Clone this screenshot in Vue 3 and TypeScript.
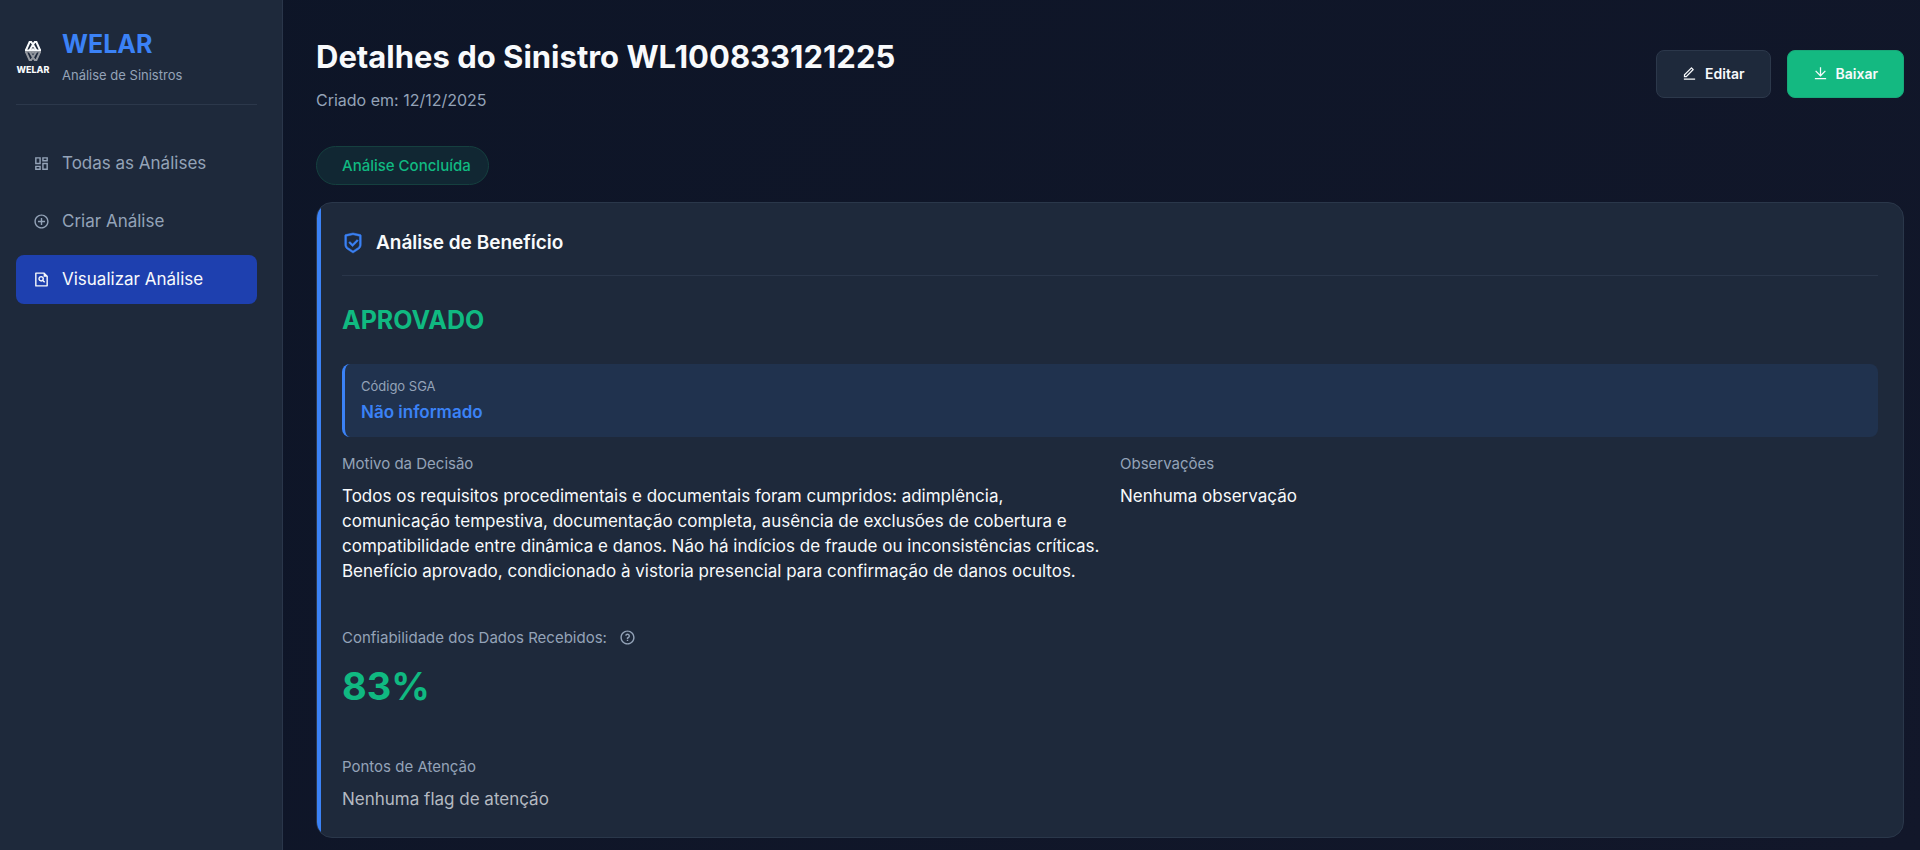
<script setup lang="ts">
interface NavItem {
  label: string
  icon: string
  active: boolean
}

const ring =
  'M12 22C6.47715 22 2 17.5228 2 12C2 6.47715 6.47715 2 12 2C17.5228 2 22 6.47715 22 12C22 17.5228 17.5228 22 12 22ZM12 20C16.4183 20 20 16.4183 20 12C20 7.58172 16.4183 4 12 4C7.58172 4 4 7.58172 4 12C4 16.4183 7.58172 20 12 20Z'

const icons = {
  dashboard:
    'M13 21V11H21V21H13ZM3 13V3H11V13H3ZM9 11V5H5V11H9ZM3 21V15H11V21H3ZM5 19H9V17H5V19ZM15 19H19V13H15V19ZM13 3H21V9H13V3ZM15 5V7H19V5H15Z',
  add: 'M11 11V7H13V11H17V13H13V17H11V13H7V11H11Z' + ring,
  fileSearch:
    'M15 4H5V20H19V8H15V4ZM3 2.9918C3 2.44405 3.44749 2 3.9985 2H16L20.9997 7L21 20.9925C21 21.5489 20.5551 22 20.0066 22H3.9934C3.44476 22 3 21.5447 3 21.0082V2.9918ZM13.529 14.4464C11.9951 15.3524 9.98633 15.1464 8.66839 13.8284C7.1063 12.2663 7.1063 9.73367 8.66839 8.17157C10.2305 6.60948 12.7631 6.60948 14.3252 8.17157C15.6432 9.48951 15.8492 11.4983 14.9432 13.0322L17.1537 15.2426L15.7395 16.6569L13.529 14.4464ZM12.911 12.4142C13.6921 11.6332 13.6921 10.3668 12.911 9.58579C12.13 8.80474 10.8637 8.80474 10.0826 9.58579C9.30156 10.3668 9.30156 11.6332 10.0826 12.4142C10.8637 13.1953 12.13 13.1953 12.911 12.4142Z',
  shield:
    'M12 1L20.2169 2.82598C20.6745 2.92766 21 3.33347 21 3.80217V13.7889C21 15.795 19.9974 17.6684 18.3282 18.7812L12 23L5.6718 18.7812C4.00261 17.6684 3 15.795 3 13.7889V3.80217C3 3.33347 3.32553 2.92766 3.78307 2.82598L12 1ZM12 3.04879L5 4.60434V13.7889C5 15.1263 5.6684 16.3752 6.7812 17.1171L12 20.5963L17.2188 17.1171C18.3316 16.3752 19 15.1263 19 13.7889V4.60434L12 3.04879ZM16.4524 8.22183L17.8666 9.63604L11.5026 16L7.25999 11.7574L8.67421 10.3431L11.5019 13.1709L16.4524 8.22183Z',
  edit: 'M6.41421 15.89L16.5563 5.74785L15.1421 4.33363L5 14.4758V15.89H6.41421ZM7.24264 17.89H3V13.6473L14.435 2.21231C14.8256 1.82179 15.4587 1.82179 15.8492 2.21231L18.6777 5.04074C19.0682 5.43126 19.0682 6.06443 18.6777 6.45495L7.24264 17.89ZM3 19.89H21V21.89H3V19.89Z',
  download:
    'M3 19H21V21H3V19ZM13 13.1716L19.0711 7.1005L20.4853 8.51472L12 17L3.51472 8.51472L4.92893 7.1005L11 13.1716V2H13V13.1716Z',
  question:
    ring +
    'M11 15H13V17H11V15ZM13 13.3551V14H11V12.5C11 11.9477 11.4477 11.5 12 11.5C12.8284 11.5 13.5 10.8284 13.5 10C13.5 9.17157 12.8284 8.5 12 8.5C11.2723 8.5 10.6656 9.01823 10.5288 9.70577L8.56731 9.31346C8.88637 7.70919 10.302 6.5 12 6.5C13.933 6.5 15.5 8.067 15.5 10C15.5 11.5855 14.4457 12.9248 13 13.3551Z',
}

const nav: NavItem[] = [
  { label: 'Todas as Análises', icon: icons.dashboard, active: false },
  { label: 'Criar Análise', icon: icons.add, active: false },
  { label: 'Visualizar Análise', icon: icons.fileSearch, active: true },
]
</script>

<template>
  <div class="app">
    <aside class="sidebar">
      <div class="brand">
        <div class="logo">
          <svg class="logo-mark" viewBox="0 0 18 22" aria-hidden="true">
            <g fill="none" stroke-width="2">
              <path d="M1.8 10.5 5.6 2H7.2L9 4.5 10.8 2H12.4L16.2 10.5M5.6 10.5 9 4.5 12.4 10.5" stroke="#f8fafc" />
              <path d="M1.8 11.5 5.6 20H7.2L9 17.5 10.8 20H12.4L16.2 11.5M5.6 11.5 9 17.5 12.4 11.5" stroke="#94989f" />
            </g>
            <path d="M1 9.5H7L9 8 11 9.5H17V11H1Z" fill="#f8fafc" />
            <path d="M1 11H17V12.5H11L9 14 7 12.5H1Z" fill="#94989f" />
          </svg>
          <span class="logo-name">WELAR</span>
        </div>
        <div>
          <div class="brand-name">WELAR</div>
          <div class="brand-sub">Análise de Sinistros</div>
        </div>
      </div>
      <nav class="nav">
        <a v-for="item in nav" :key="item.label" href="#" class="nav-item" :class="{ active: item.active }">
          <svg class="icon" viewBox="0 0 24 24" aria-hidden="true"><path :d="item.icon" /></svg>
          {{ item.label }}
        </a>
      </nav>
    </aside>

    <main class="main">
      <header class="header">
        <div>
          <h1 class="title">Detalhes do Sinistro WL100833121225</h1>
          <p class="created">Criado em: 12/12/2025</p>
        </div>
        <div class="actions">
          <button type="button" class="btn">
            <svg class="icon small" viewBox="0 0 24 24" aria-hidden="true"><path :d="icons.edit" /></svg>
            Editar
          </button>
          <button type="button" class="btn primary">
            <svg class="icon small" viewBox="0 0 24 24" aria-hidden="true"><path :d="icons.download" /></svg>
            Baixar
          </button>
        </div>
      </header>

      <div class="status">Análise Concluída</div>

      <section class="card">
        <h2 class="card-title">
          <svg class="icon large" viewBox="0 0 24 24" aria-hidden="true"><path :d="icons.shield" /></svg>
          Análise de Benefício
        </h2>
        <div class="decision">APROVADO</div>
        <div class="code">
          <div class="code-label">Código SGA</div>
          <div class="code-value">Não informado</div>
        </div>
        <div class="columns">
          <div>
            <div class="label">Motivo da Decisão</div>
            <p class="value">
              Todos os requisitos procedimentais e documentais foram cumpridos: adimplência, comunicação tempestiva,
              documentação completa, ausência de exclusões de cobertura e compatibilidade entre dinâmica e danos. Não há
              indícios de fraude ou inconsistências críticas. Benefício aprovado, condicionado à vistoria presencial
              para confirmação de danos ocultos.
            </p>
          </div>
          <div>
            <div class="label">Observações</div>
            <p class="value">Nenhuma observação</p>
          </div>
        </div>
        <div class="reliability">
          <div class="label with-help">
            Confiabilidade dos Dados Recebidos:
            <button type="button" class="help" aria-label="Ajuda">
              <svg class="icon" viewBox="0 0 24 24" aria-hidden="true"><path :d="icons.question" /></svg>
            </button>
          </div>
          <div class="percent">83%</div>
        </div>
        <div>
          <div class="label">Pontos de Atenção</div>
          <p class="value muted">Nenhuma flag de atenção</p>
        </div>
      </section>
    </main>
  </div>
</template>

<style>
body {
  background: #0f172a;
}
</style>

<style scoped>
* {
  box-sizing: border-box;
}
.app {
  display: flex;
  min-height: 100vh;
  background: linear-gradient(135deg, #0d1527 0%, #12172a 100%);
  color: #f8fafc;
  font-family: Inter, 'Liberation Sans', sans-serif;
  font-size: 17px;
  line-height: 25px;
}
h1,
h2,
p {
  margin: 0;
}
.icon {
  width: 17px;
  height: 17px;
  flex: none;
  fill: currentColor;
}
.icon.small {
  width: 15px;
  height: 15px;
}
.icon.large {
  width: 22px;
  height: 22px;
  color: #3b82f6;
  stroke: currentColor;
  stroke-width: 0.5;
}
.sidebar {
  flex: none;
  width: 283px;
  padding: 25px 25px 25px 16px;
  background: #1e293b;
  border-right: 1px solid #2a364a;
}
.brand {
  display: flex;
  align-items: center;
  gap: 12px;
  padding-bottom: 16px;
  border-bottom: 1px solid #2c384b;
}
.logo {
  display: flex;
  flex-direction: column;
  align-items: center;
  gap: 3px;
  width: 34px;
}
.logo-mark {
  width: 18px;
  height: 22px;
}
.logo-name {
  font-size: 9px;
  font-weight: 800;
  line-height: 9px;
}
.brand-name {
  color: #3b82f6;
  font-size: 25px;
  font-weight: 700;
  line-height: 38px;
}
.brand-sub {
  color: #94a3b8;
  font-size: 13px;
  line-height: 25px;
}
.nav {
  display: flex;
  flex-direction: column;
  gap: 9px;
  margin-top: 34px;
}
.nav-item {
  display: flex;
  align-items: center;
  gap: 12px;
  padding: 12px 17px;
  border-radius: 8px;
  color: #94a3b8;
  text-decoration: none;
}
.nav-item.active {
  background: #1e40af;
  color: #f8fafc;
}
.main {
  flex: 1;
  min-width: 0;
  padding: 34px 16px 12px 33px;
}
.header {
  display: flex;
  align-items: center;
  justify-content: space-between;
}
.title {
  font-size: 31px;
  font-weight: 700;
  line-height: 46px;
}
.created {
  margin-top: 8px;
  color: #94a3b8;
  font-size: 16px;
}
.actions {
  display: flex;
  gap: 16px;
}
.btn {
  display: flex;
  align-items: center;
  gap: 8px;
  height: 48px;
  padding: 0 25px;
  border: 1px solid #2c384b;
  border-radius: 8px;
  background: #1e293b;
  color: #f8fafc;
  font: 600 14px Inter, 'Liberation Sans', sans-serif;
}
.btn.primary {
  border-color: #17a979;
  background: #14b981;
}
.status {
  width: fit-content;
  margin-top: 33px;
  padding: 6px 17px 6px 25px;
  border: 1px solid #15403f;
  border-radius: 20px;
  background: #112733;
  color: #10b981;
  font-size: 15px;
  font-weight: 500;
}
.card {
  position: relative;
  margin-top: 17px;
  padding: 24px 25px 25px;
  border: 1px solid #2a374a;
  border-radius: 16px;
  background: #1e293b;
  overflow: hidden;
}
.card::before {
  content: '';
  position: absolute;
  top: 0;
  bottom: 0;
  left: 0;
  width: 4px;
  background: #3b82f6;
}
.card-title {
  display: flex;
  align-items: center;
  gap: 12px;
  padding-bottom: 16px;
  border-bottom: 1px solid #2a364a;
  font-size: 19px;
  font-weight: 600;
  line-height: 32px;
}
.decision {
  margin-top: 25px;
  color: #10b981;
  font-size: 25px;
  font-weight: 700;
  line-height: 38px;
}
.code {
  margin-top: 25px;
  padding: 12px 16px;
  border-left: 3px solid #3b82f6;
  border-radius: 8px;
  background: #20324e;
}
.code-label {
  color: #94a3b8;
  font-size: 13px;
  line-height: 20px;
}
.code-value {
  margin-top: 4px;
  color: #3b82f6;
  font-weight: 600;
}
.columns {
  display: grid;
  grid-template-columns: 1fr 1fr;
  gap: 20px;
  margin-top: 14px;
}
.label {
  color: #94a3b8;
  font-size: 15px;
}
.value {
  margin-top: 8px;
}
.value.muted {
  color: #b4b9c1;
}
.reliability {
  margin: 41px 0 40px;
}
.with-help {
  display: flex;
  align-items: center;
  gap: 12px;
}
.help {
  display: flex;
  padding: 0;
  border: 0;
  background: none;
  color: #94a3b8;
}
.percent {
  margin-top: 8px;
  color: #10b981;
  font-size: 38px;
  font-weight: 700;
  line-height: 56px;
}
</style>
